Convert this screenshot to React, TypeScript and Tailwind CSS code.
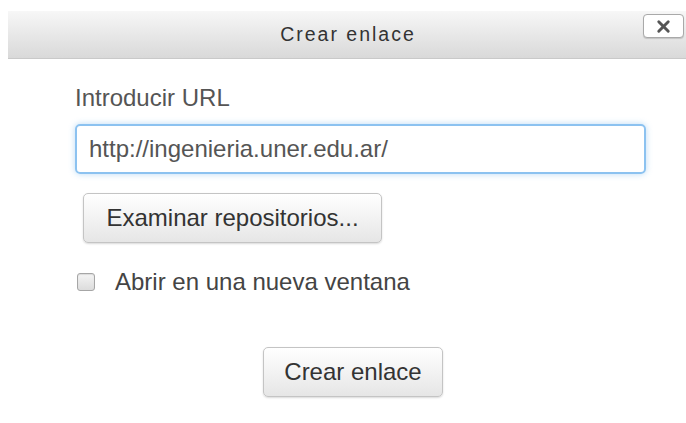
import { X } from "lucide-react";

const font = { fontFamily: '"Liberation Sans", Arial, sans-serif' };

export default function App() {
  return (
    <div
      className="w-[686px] h-[423px] overflow-hidden bg-white pt-[11px] pl-[8px]"
      style={font}
    >
      <div className="w-[690px]">
        {/* Title bar */}
        <div className="relative h-[48px] flex items-center justify-center bg-gradient-to-b from-[#f7f7f7] to-[#d9d9d9] border-b border-[#c9c9c9]">
          <span className="text-[19.5px] tracking-[2px] text-[#333] mr-[10px]">
            Crear enlace
          </span>
          <button className="absolute right-[14px] top-[3px] w-[41px] h-[24px] flex items-center justify-center rounded-[4px] bg-white border border-[#a9a9a9] shadow-[0_1px_1px_rgba(0,0,0,0.15)]">
            <X size={19} strokeWidth={3.6} className="text-[#555]" />
          </button>
        </div>

        {/* Form body */}
        <div className="pl-[67px] pt-[26px] text-[24px] text-[#555]">
          <label className="block leading-[26px]">Introducir URL</label>

          <div className="mt-[13px] w-[571px] h-[50px] flex items-center px-[12px] rounded-[5px] border-2 border-[#8cc2f0] shadow-[0_0_6px_rgba(102,175,233,0.45)] text-[#555]">
            http://ingenieria.uner.edu.ar/
          </div>

          <button className="mt-[19px] ml-[8px] w-[299px] h-[50px] rounded-[5px] border border-[#c4c4c4] bg-gradient-to-b from-white to-[#e6e6e6] shadow-[0_1px_2px_rgba(0,0,0,0.15)] text-[#333]">
            Examinar repositorios...
          </button>

          <div className="mt-[21px] flex items-center h-[36px]">
            <span className="ml-[2px] w-[18px] h-[18px] rounded-[3px] border border-[#a6a6a6] bg-gradient-to-b from-[#f4f4f4] to-[#dcdcdc] shadow-[inset_0_1px_1px_rgba(0,0,0,0.1)]" />
            <span className="ml-[20px] text-[#444]">Abrir en una nueva ventana</span>
          </div>

          <div className="mt-[47px] pl-[188px]">
            <button className="w-[180px] h-[50px] rounded-[5px] border border-[#c4c4c4] bg-gradient-to-b from-white to-[#e6e6e6] shadow-[0_1px_2px_rgba(0,0,0,0.15)] text-[#333]">
              Crear enlace
            </button>
          </div>
        </div>
      </div>
    </div>
  );
}
